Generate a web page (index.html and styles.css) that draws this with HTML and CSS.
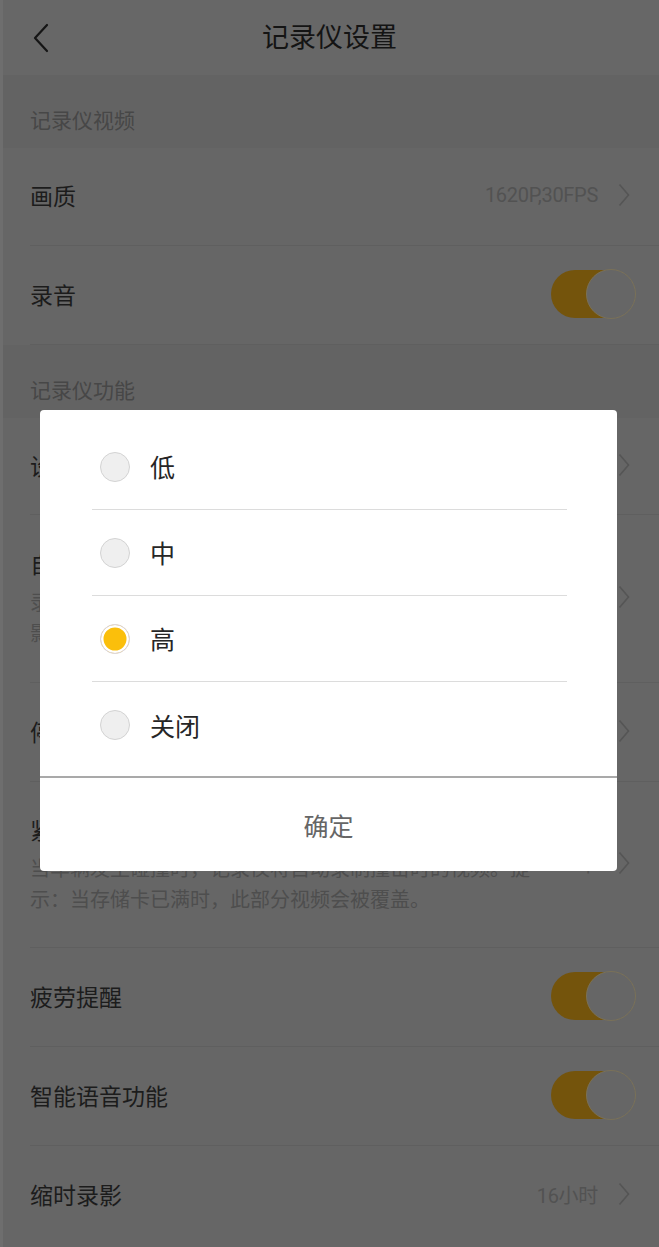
FILE: index.html
```html
<!DOCTYPE html>
<html lang="zh-CN">
<head>
<meta charset="utf-8">
<title>记录仪设置</title>
<link rel="stylesheet" href="styles.css">
</head>
<body>
<div class="page">
  <header class="topbar">
    <svg class="back" width="16" height="30" viewBox="0 0 16 30"><path d="M14 2 L2 15 L14 28" fill="none" stroke="#151515" stroke-width="2.2" stroke-linecap="round" stroke-linejoin="round"/></svg>
    <h1 class="title">记录仪设置</h1>
  </header>

  <div class="section">记录仪视频</div>
  <div class="row h98">
    <div class="row-main"><div class="row-title">画质</div></div>
    <span class="value">1620P,30FPS</span>
    <svg class="chev" width="12" height="24" viewBox="0 0 12 24"><path d="M1.5 1.5 L10.5 12 L1.5 22.5" fill="none" stroke="#555" stroke-width="1.6"/></svg>
  </div>
  <div class="row">
    <div class="row-main"><div class="row-title">录音</div></div>
    <span class="toggle"><span class="knob"></span></span>
  </div>

  <div class="section">记录仪功能</div>
  <div class="row h97">
    <div class="row-main"><div class="row-title">设备音量</div></div>
    <span class="value">中</span>
    <svg class="chev" width="12" height="24" viewBox="0 0 12 24"><path d="M1.5 1.5 L10.5 12 L1.5 22.5" fill="none" stroke="#555" stroke-width="1.6"/></svg>
  </div>
  <div class="row tall">
    <div class="row-main">
      <div class="row-title">自动录影</div>
      <div class="desc">录像时将自动分段保存，存储卡满时会循环覆盖最早的录影文件。</div>
    </div>
    <span class="value">1分钟</span>
    <svg class="chev" width="12" height="24" viewBox="0 0 12 24"><path d="M1.5 1.5 L10.5 12 L1.5 22.5" fill="none" stroke="#555" stroke-width="1.6"/></svg>
  </div>
  <div class="row">
    <div class="row-main"><div class="row-title">停车监控</div></div>
    <span class="value">关闭</span>
    <svg class="chev" width="12" height="24" viewBox="0 0 12 24"><path d="M1.5 1.5 L10.5 12 L1.5 22.5" fill="none" stroke="#555" stroke-width="1.6"/></svg>
  </div>
  <div class="row tall2">
    <div class="row-main">
      <div class="row-title">紧急录影</div>
      <div class="desc">当车辆发生碰撞时，记录仪将自动录制撞击时的视频。提示：当存储卡已满时，此部分视频会被覆盖。</div>
    </div>
    <span class="value">中</span>
    <svg class="chev" width="12" height="24" viewBox="0 0 12 24"><path d="M1.5 1.5 L10.5 12 L1.5 22.5" fill="none" stroke="#555" stroke-width="1.6"/></svg>
  </div>
  <div class="row">
    <div class="row-main"><div class="row-title">疲劳提醒</div></div>
    <span class="toggle"><span class="knob"></span></span>
  </div>
  <div class="row">
    <div class="row-main"><div class="row-title">智能语音功能</div></div>
    <span class="toggle"><span class="knob"></span></span>
  </div>
  <div class="row last">
    <div class="row-main"><div class="row-title">缩时录影</div></div>
    <span class="value">16小时</span>
    <svg class="chev" width="12" height="24" viewBox="0 0 12 24"><path d="M1.5 1.5 L10.5 12 L1.5 22.5" fill="none" stroke="#555" stroke-width="1.6"/></svg>
  </div>

  <div class="dialog">
    <ul class="options">
      <li class="option"><span class="radio"></span><span class="label">低</span></li>
      <li class="option"><span class="radio"></span><span class="label">中</span></li>
      <li class="option"><span class="radio checked"></span><span class="label">高</span></li>
      <li class="option"><span class="radio"></span><span class="label">关闭</span></li>
    </ul>
    <div class="confirm">确定</div>
  </div>
</div>
</body>
</html>
```

FILE: styles.css
```css
* { box-sizing: border-box; }
html, body { margin: 0; padding: 0; }
body {
  background: #666666;
  font-family: "Noto Sans CJK SC", Roboto, "Noto Sans", sans-serif;
  color: #1c1c1c;
}
.page {
  position: relative;
  width: 659px;
  height: 1247px;
  overflow: hidden;
  border-left: 3px solid #6e6e6e;
  background: #666666;
}
.topbar {
  position: relative;
  height: 75px;
  padding-bottom: 4px;
  display: flex;
  align-items: center;
  justify-content: center;
  background: #676767;
}
.back {
  position: absolute;
  left: 30px;
  top: 23px;
}
.title {
  margin: 0;
  font-size: 27px;
  font-weight: 400;
  color: #141414;
  line-height: 1;
  margin-left: -3px;
}
.section {
  height: 73px;
  background: #636363;
  padding: 28px 0 0 27px;
  font-size: 21px;
  line-height: 32px;
  color: #474747;
}
.row {
  height: 99px;
  margin-left: 27px;
  padding-right: 24px;
  padding-bottom: 3px;
  display: flex;
  align-items: center;
  border-bottom: 1px solid #5f5f5f;
}
.row.h98 { height: 98px; }
.row.h97 { height: 97px; }
.row.last { border-bottom: none; }
.row.tall { height: 168px; }
.row.tall2 { height: 166px; }
.row-main {
  flex: 1;
  min-width: 0;
}
.row-title {
  font-size: 23px;
  line-height: 32px;
  color: #1c1c1c;
}
.tall .row-title, .tall2 .row-title { margin-bottom: 7px; }
.desc {
  width: 512px;
  font-size: 20px;
  line-height: 31px;
  color: #4e4e4e;
}
.value {
  font-family: Roboto, "Noto Sans CJK SC", sans-serif;
  font-size: 20px;
  color: #525252;
  margin-right: 20px;
  letter-spacing: -0.3px;
}
.chev { display: block; flex: none; margin-right: 5px; }
.toggle {
  position: relative;
  flex: none;
  width: 85px;
  height: 50px;
  margin-right: -1px;
}
.toggle::before {
  content: "";
  position: absolute;
  left: 0;
  top: 1px;
  width: 78px;
  height: 48px;
  border-radius: 24px;
  background: #74540c;
}
.knob {
  position: absolute;
  right: 0;
  top: 0;
  width: 50px;
  height: 50px;
  border-radius: 50%;
  background: #666666;
  border: 1px solid #7a7158;
}
.dialog {
  position: absolute;
  left: 37px;
  top: 410px;
  width: 577px;
  height: 461px;
  background: #ffffff;
  border-radius: 4px;
  display: flex;
  flex-direction: column;
}
.options {
  list-style: none;
  margin: 0;
  padding: 14px 50px 8px 52px;
  border-bottom: 2px solid #a9a9a9;
}
.option {
  height: 86px;
  display: flex;
  align-items: center;
  padding-left: 8px;
  border-bottom: 1.5px solid #dcdcdc;
}
.option:last-child { border-bottom: none; }
.radio {
  width: 30px;
  height: 30px;
  border-radius: 50%;
  background: #efefef;
  border: 1.5px solid #d3d3d3;
  margin-right: 20px;
  flex: none;
}
.radio.checked {
  background: #fbbf0b;
  border: 1.5px solid #d9d6e6;
  box-shadow: inset 0 0 0 2.5px #ffffff;
}
.label {
  font-size: 25px;
  color: #262626;
  line-height: 1;
}
.confirm {
  flex: 1;
  display: flex;
  align-items: center;
  justify-content: center;
  font-size: 25px;
  color: #666666;
}
```
